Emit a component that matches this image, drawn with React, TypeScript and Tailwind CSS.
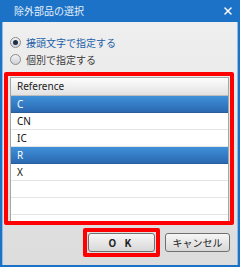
import { X } from "lucide-react";

type Row = { ref: string; selected: boolean };

const rows: Row[] = [
  { ref: "C", selected: true },
  { ref: "CN", selected: false },
  { ref: "IC", selected: false },
  { ref: "R", selected: true },
  { ref: "X", selected: false },
  { ref: "", selected: false },
  { ref: "", selected: false },
  { ref: "", selected: false },
];

const Radio = ({ checked, label }: { checked: boolean; label: string }) => {
  return (
    <div className="h-[17px] flex items-center gap-[5px]">
      <div className="w-[11px] h-[11px] rounded-full border border-[#8c8c8c] bg-gradient-to-b from-[#f2f2f2] to-[#cfd3d8] flex items-center justify-center">
        {checked && <div className="w-[5px] h-[5px] rounded-full bg-[#1f2f45]" />}
      </div>
      <span className={`text-[10px] leading-none ${checked ? "text-[#2160a8]" : "text-[#3a3a3a]"}`}>
        {label}
      </span>
    </div>
  );
};

const App = () => {
  return (
    <div className="w-[240px] h-[267px] bg-[#1b72c6] flex flex-col overflow-hidden font-['Noto_Sans','Noto_Sans_CJK_JP',sans-serif]">
      <div className="h-[22px] shrink-0 flex items-center justify-between pl-[14px] pr-[6px]">
        <span className="text-[10px] leading-none text-[#e6f0fb] font-['Noto_Sans_CJK_JP',sans-serif]">
          除外部品の選択
        </span>
        <X size={12} strokeWidth={3} className="text-white" />
      </div>

      <div className="flex-1 mx-[2px] mb-[2px] border-x border-[#8fbbe6] bg-gradient-to-b from-[#efefef] to-[#dcdcdc] flex flex-col pt-[12px] font-['Noto_Sans_CJK_JP',sans-serif]">
        <div className="pl-[7px] flex flex-col">
          <Radio checked label="接頭文字で指定する" />
          <Radio checked={false} label="個別で指定する" />
        </div>

        <div className="mt-[4px] ml-[1px] mr-[3px] h-[153px] border-[4px] border-[#ff0000] rounded-[2px] pl-[2px] pr-[1px] pt-[1px] flex">
          <div className="flex-1 overflow-hidden border-x border-t border-[#a6a6a6] bg-white font-['Noto_Sans',sans-serif]">
            <div className="h-[18px] flex items-center pl-[6px] bg-gradient-to-b from-[#fdfdfd] to-[#e2e2e2] border-b border-[#bdbdbd] text-[10px] text-[#222]">
              Reference
            </div>
            {rows.map((row, i) => (
              <div
                key={i}
                className={
                  row.selected
                    ? "h-[17px] flex items-center pl-[6px] text-[10px] text-white bg-gradient-to-b from-[#3f91d9] to-[#2b69b2] border-b border-[#2a5d9c]"
                    : "h-[17px] flex items-center pl-[6px] text-[10px] text-[#111] border-b border-[#e4e4e4]"
                }
              >
                {row.ref}
              </div>
            ))}
          </div>
        </div>

        <div className="mt-[3px] pr-[7px] flex justify-end items-start gap-[5px]">
          <div className="border-[4px] border-[#ff0000] rounded-[2px] p-[1px]">
            <button className="w-[67px] h-[19px] rounded-[3px] border border-[#707070] bg-gradient-to-b from-[#f6f6f6] to-[#d8d8d8] text-[10px] font-semibold text-[#222] tracking-[3px] flex items-center justify-center">
              O K
            </button>
          </div>
          <button className="mt-[5px] w-[65px] h-[19px] rounded-[3px] border border-[#707070] bg-gradient-to-b from-[#f6f6f6] to-[#d8d8d8] text-[10px] text-[#222] flex items-center justify-center">
            キャンセル
          </button>
        </div>
      </div>
    </div>
  );
};

export default App;
